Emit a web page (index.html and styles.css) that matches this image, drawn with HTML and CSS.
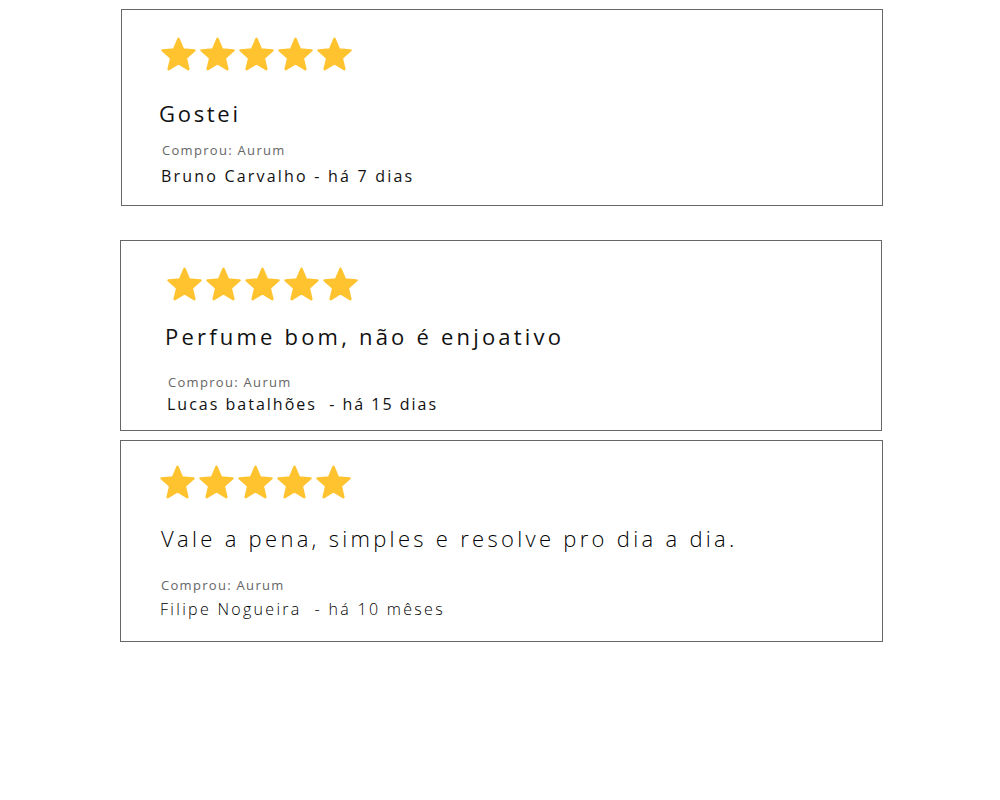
FILE: index.html
```html
<!DOCTYPE html>
<html>
<head>
  <title>Avaliações</title>
  <link rel="stylesheet" href="styles.css">
</head>
<body>
  <div class="reviews">
    <div class="review review-first">
      <div class="stars">
        <svg viewBox="1 1 22 21"><path d="M12 17.27L18.18 21l-1.64-7.03L22 9.24l-7.19-.61L12 2 9.19 8.63 2 9.24l5.46 4.73L5.82 21z"/></svg>
        <svg viewBox="1 1 22 21"><path d="M12 17.27L18.18 21l-1.64-7.03L22 9.24l-7.19-.61L12 2 9.19 8.63 2 9.24l5.46 4.73L5.82 21z"/></svg>
        <svg viewBox="1 1 22 21"><path d="M12 17.27L18.18 21l-1.64-7.03L22 9.24l-7.19-.61L12 2 9.19 8.63 2 9.24l5.46 4.73L5.82 21z"/></svg>
        <svg viewBox="1 1 22 21"><path d="M12 17.27L18.18 21l-1.64-7.03L22 9.24l-7.19-.61L12 2 9.19 8.63 2 9.24l5.46 4.73L5.82 21z"/></svg>
        <svg viewBox="1 1 22 21"><path d="M12 17.27L18.18 21l-1.64-7.03L22 9.24l-7.19-.61L12 2 9.19 8.63 2 9.24l5.46 4.73L5.82 21z"/></svg>
      </div>
      <div class="review-title">Gostei</div>
      <div class="review-product">Comprou: Aurum</div>
      <div class="review-author">Bruno Carvalho - há 7 dias</div>
    </div>

    <div class="review review-second">
      <div class="stars">
        <svg viewBox="1 1 22 21"><path d="M12 17.27L18.18 21l-1.64-7.03L22 9.24l-7.19-.61L12 2 9.19 8.63 2 9.24l5.46 4.73L5.82 21z"/></svg>
        <svg viewBox="1 1 22 21"><path d="M12 17.27L18.18 21l-1.64-7.03L22 9.24l-7.19-.61L12 2 9.19 8.63 2 9.24l5.46 4.73L5.82 21z"/></svg>
        <svg viewBox="1 1 22 21"><path d="M12 17.27L18.18 21l-1.64-7.03L22 9.24l-7.19-.61L12 2 9.19 8.63 2 9.24l5.46 4.73L5.82 21z"/></svg>
        <svg viewBox="1 1 22 21"><path d="M12 17.27L18.18 21l-1.64-7.03L22 9.24l-7.19-.61L12 2 9.19 8.63 2 9.24l5.46 4.73L5.82 21z"/></svg>
        <svg viewBox="1 1 22 21"><path d="M12 17.27L18.18 21l-1.64-7.03L22 9.24l-7.19-.61L12 2 9.19 8.63 2 9.24l5.46 4.73L5.82 21z"/></svg>
      </div>
      <div class="review-title">Perfume bom, não é enjoativo</div>
      <div class="review-product">Comprou: Aurum</div>
      <div class="review-author">Lucas batalhões &nbsp;- há 15 dias</div>
    </div>

    <div class="review review-third">
      <div class="stars">
        <svg viewBox="1 1 22 21"><path d="M12 17.27L18.18 21l-1.64-7.03L22 9.24l-7.19-.61L12 2 9.19 8.63 2 9.24l5.46 4.73L5.82 21z"/></svg>
        <svg viewBox="1 1 22 21"><path d="M12 17.27L18.18 21l-1.64-7.03L22 9.24l-7.19-.61L12 2 9.19 8.63 2 9.24l5.46 4.73L5.82 21z"/></svg>
        <svg viewBox="1 1 22 21"><path d="M12 17.27L18.18 21l-1.64-7.03L22 9.24l-7.19-.61L12 2 9.19 8.63 2 9.24l5.46 4.73L5.82 21z"/></svg>
        <svg viewBox="1 1 22 21"><path d="M12 17.27L18.18 21l-1.64-7.03L22 9.24l-7.19-.61L12 2 9.19 8.63 2 9.24l5.46 4.73L5.82 21z"/></svg>
        <svg viewBox="1 1 22 21"><path d="M12 17.27L18.18 21l-1.64-7.03L22 9.24l-7.19-.61L12 2 9.19 8.63 2 9.24l5.46 4.73L5.82 21z"/></svg>
      </div>
      <div class="review-title">Vale a pena, simples e resolve pro dia a dia.</div>
      <div class="review-product">Comprou: Aurum</div>
      <div class="review-author">Filipe Nogueira &nbsp;- há 10 mêses</div>
    </div>
  </div>
</body>
</html>
```

FILE: styles.css
```css
body {
  margin: 0;
  background: #fff;
  font-family: "Open Sans", Arial, sans-serif;
  color: #111;
}

.reviews {
  display: flex;
  flex-direction: column;
  padding-top: 9px;
}

.review {
  display: flex;
  flex-direction: column;
  align-items: flex-start;
  border: 1px solid #666;
  box-sizing: border-box;
  width: 762px;
  margin-left: 120px;
}

.stars {
  display: flex;
  gap: 4px;
}

.stars svg {
  width: 35px;
  height: 34px;
}

.stars path {
  fill: #ffc330;
  stroke: #ffc330;
  stroke-width: 1.6;
  stroke-linejoin: round;
}

.review-title {
  font-size: 22px;
  line-height: 28px;
  letter-spacing: 2.7px;
}

.review-product {
  font-size: 13px;
  line-height: 16px;
  color: #666;
  letter-spacing: 1.3px;
}

.review-author {
  font-size: 16px;
  line-height: 20px;
  letter-spacing: 2.2px;
}

/* card 1 */
.review-first {
  margin-left: 121px;
  height: 197px;
  padding: 27px 0 0 39px;
}

.review-first .review-title {
  margin: 28px 0 0 -2px;
}

.review-first .review-product {
  margin-top: 15px;
  margin-left: 1px;
}

.review-first .review-author {
  margin-top: 8px;
}

/* card 2 */
.review-second {
  margin-top: 34px;
  height: 191px;
  padding: 26px 0 0 46px;
}

.review-second .review-title {
  margin: 21px 0 0 -2px;
  letter-spacing: 3.2px;
}

.review-second .review-product {
  margin-top: 24px;
  margin-left: 1px;
}

.review-second .review-author {
  margin-top: 4px;
  letter-spacing: 2px;
}

/* card 3 */
.review-third {
  margin-top: 9px;
  width: 763px;
  height: 202px;
  padding: 24px 0 0 39px;
}

.review-third .review-title {
  margin: 25px 0 0 1px;
  font-weight: 300;
  color: #000;
  letter-spacing: 3.3px;
}

.review-third .review-product {
  margin-top: 25px;
  margin-left: 1px;
}

.review-third .review-author {
  margin-top: 6px;
  font-weight: 300;
  color: #000;
  letter-spacing: 2.3px;
}
```
